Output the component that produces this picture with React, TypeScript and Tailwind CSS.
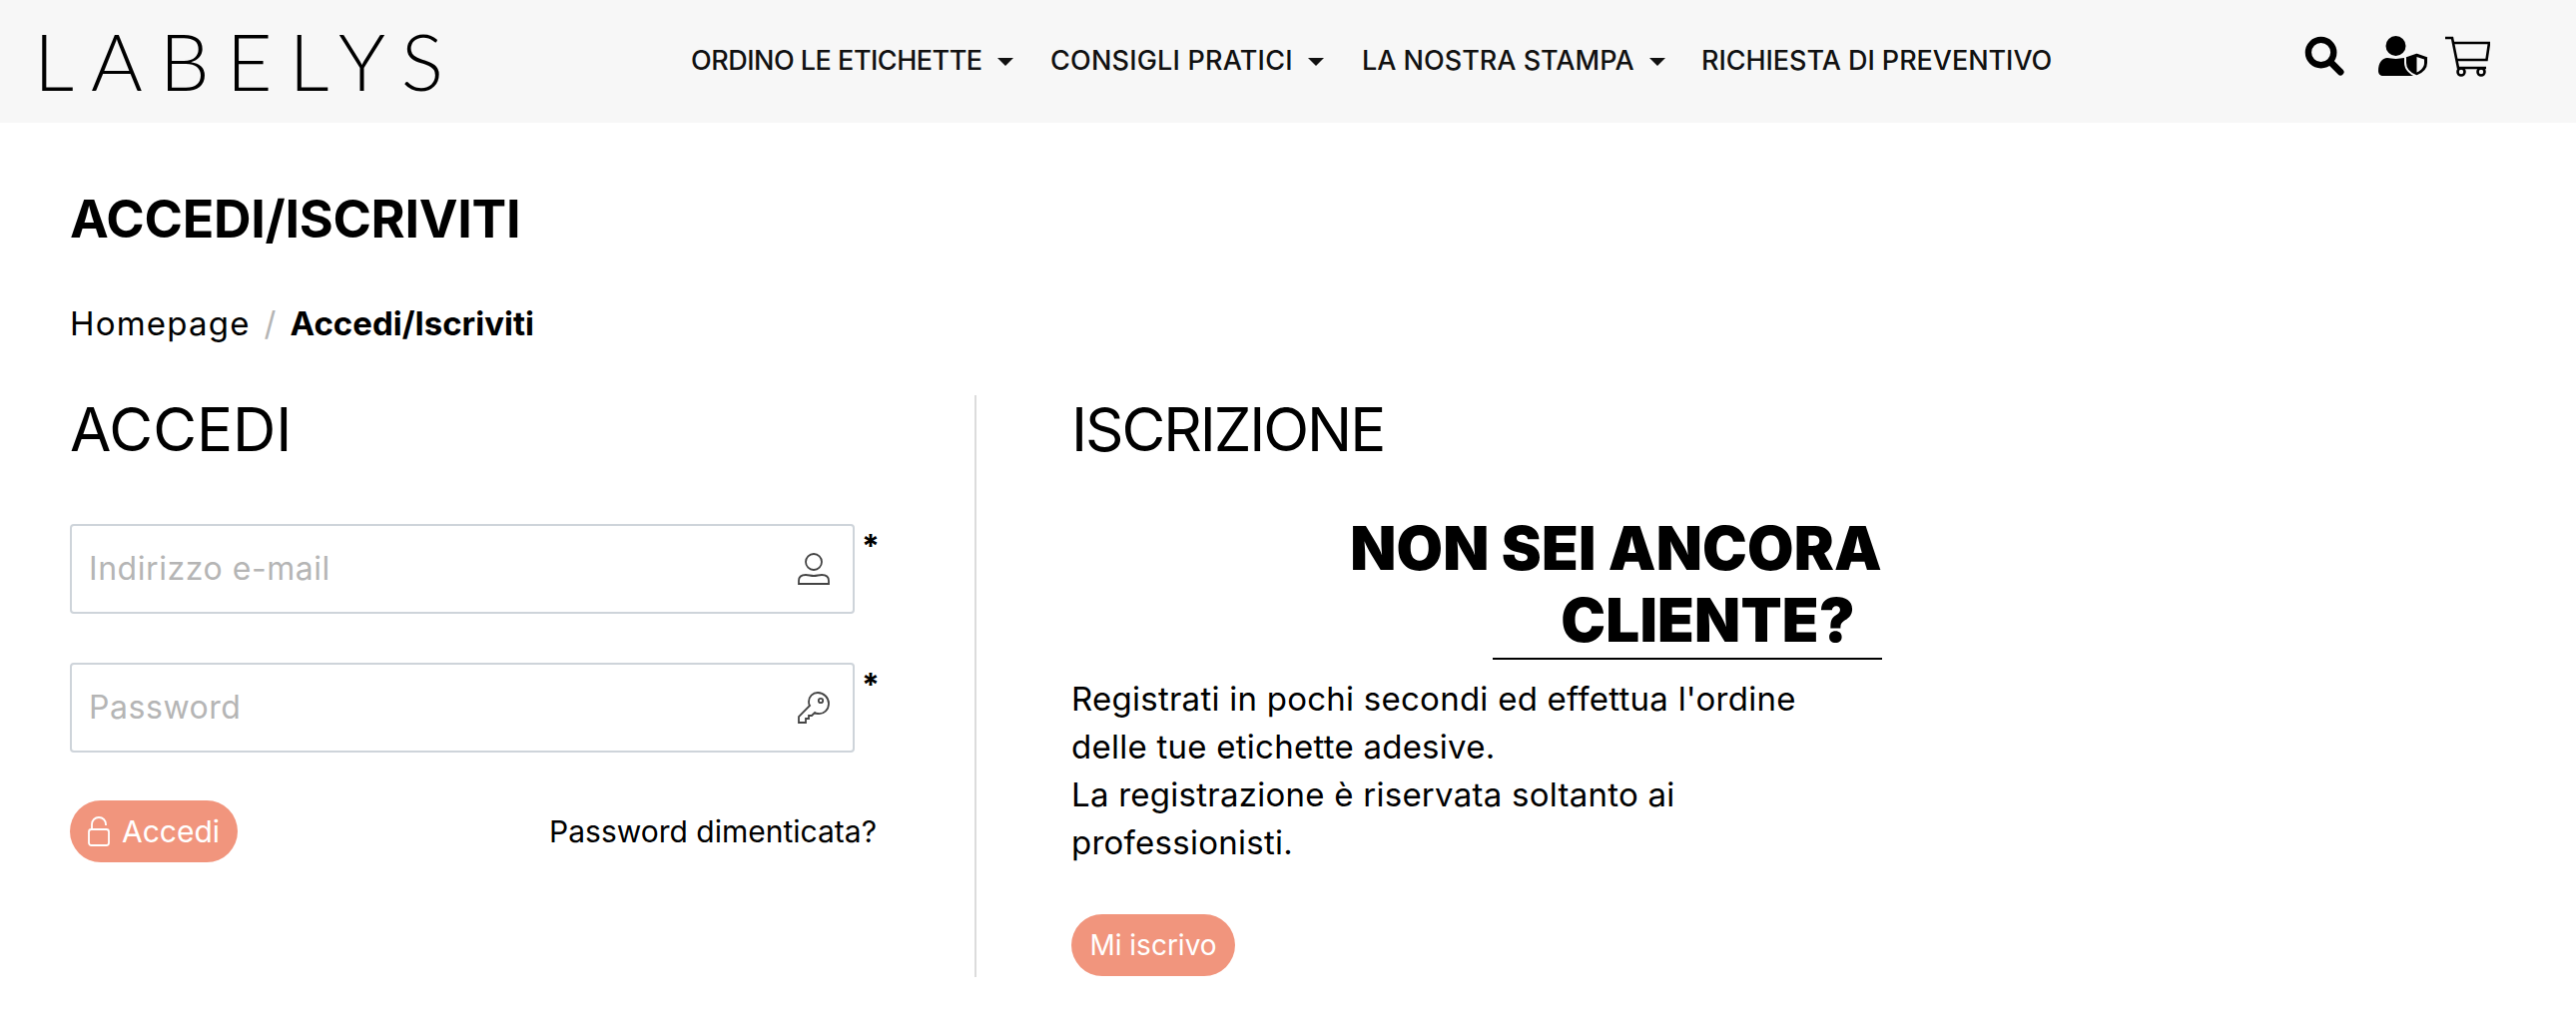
import React from "react";

const F = "font-['Inter','Liberation_Sans',sans-serif]";

function Caret() {
  return <span className="ml-[15px] inline-block w-0 h-0 border-x-[8px] border-x-transparent border-t-[8px] border-t-[#111]" />;
}

function NavItem({ label, caret, w, t }: { label: string; caret?: boolean; w: string; t: string }) {
  return (
    <a className={`flex items-center whitespace-nowrap text-[27px] font-medium text-[#111] ${t} ${w}`}>
      {label}
      {caret && <Caret />}
    </a>
  );
}

function Field({ placeholder, icon }: { placeholder: string; icon: React.ReactNode }) {
  return (
    <div className="flex items-start">
      <div className="flex items-center justify-between w-[786px] h-[90px] border-2 border-[#ced4da] rounded-[4px] pl-[17px] pr-[23px] bg-white">
        <span className="text-[32px] tracking-[0.55px] text-[#b5b5b5]">{placeholder}</span>
        {icon}
      </div>
      <span className="ml-[7px] mt-[3px] text-[32px] leading-[40px] font-bold text-black">*</span>
    </div>
  );
}

export default function App() {
  return (
    <div className={`${F} min-h-[1022px] bg-white text-black`}>
      <header className="flex items-center h-[123px] bg-[#f7f7f7] pl-[34px]">
        <div className="w-[658px] font-['Lato',sans-serif] font-light text-[79px] leading-none tracking-[17px] text-black -mt-[3px]">LABELYS</div>
        <nav className="flex items-center h-full">
          <NavItem label="ORDINO LE ETICHETTE" caret w="w-[360px]" t="tracking-[-0.5px]" />
          <NavItem label="CONSIGLI PRATICI" caret w="w-[312px]" t="tracking-[0.2px]" />
          <NavItem label="LA NOSTRA STAMPA" caret w="w-[340px]" t="tracking-[0px]" />
          <NavItem label="RICHIESTA DI PREVENTIVO" w="w-[604px]" t="tracking-[-0.05px]" />
        </nav>
        <div className="flex items-center -mt-[10px]">
          <svg width="41" height="41" viewBox="0 0 42 42" fill="none" stroke="#000">
            <circle cx="17" cy="17" r="13" strokeWidth="6.5" />
            <path d="M27 27L37 37" strokeWidth="7" strokeLinecap="round" />
          </svg>
          <svg width="51" height="41" viewBox="0 0 51 41" className="ml-[33px]">
            <circle cx="17.500" cy="10" r="10" fill="#000" />
            <path d="M0 35c0-8 4-13 9-13 3 0 5 1 8.500 1s5-1 8.500-1c6 0 9 5 9 13v5H5c-3 0-5-2-5-5z" fill="#000" />
            <path d="M38.500 16.500l11.500 4v6.500c0 6-5 11-11.500 13.500C32 38 27 33 27 27v-6.500z" fill="#000" stroke="#f7f7f7" strokeWidth="2" />
            <path d="M38.500 21l7.500 2.500V27c0 4-3 7.500-7.500 9.500z" fill="#f7f7f7" />
          </svg>
          <svg width="46" height="42" viewBox="0 0 46 42" fill="none" stroke="#000" strokeWidth="2.600" className="ml-[15px]">
            <path d="M1 2h7l6 30h28" />
            <path d="M9 7h36l-2.500 17H12.500" />
            <circle cx="17" cy="36" r="3.500" />
            <circle cx="37" cy="36" r="3.500" />
          </svg>
        </div>
      </header>

      <main className="pl-[70px]">
        <h1 className="mt-[71px] text-[52px] leading-[52px] font-bold tracking-[-0.3px]">ACCEDI/ISCRIVITI</h1>
        <div className="mt-[58px] flex items-center text-[33px] leading-[40px]">
          <span className="tracking-[1.2px]">Homepage</span>
          <span className="mx-[14px] text-[#b5b5b5]">/</span>
          <span className="font-bold">Accedi/Iscriviti</span>
        </div>

        <div className="mt-[52px] flex">
          <section className="w-[908px] h-[583px] border-r-2 border-[#dcdcdc]">
            <h2 className="text-[60px] leading-[72px] -mt-[2px]">ACCEDI</h2>
            <div className="mt-[59px] flex flex-col gap-[49px]">
              <Field
                placeholder="Indirizzo e-mail"
                icon={
                  <svg width="32" height="32" viewBox="0 0 32 32" fill="none" stroke="#444" strokeWidth="1.800">
                    <circle cx="16" cy="9" r="8" />
                    <path d="M1 31v-3c0-4 3-6 7-6 3 0 5 1 8 1s5-1 8-1c4 0 7 2 7 6v3z" />
                  </svg>
                }
              />
              <Field
                placeholder="Password"
                icon={
                  <svg width="32" height="32" viewBox="0 0 32 32" fill="none" stroke="#444" strokeWidth="1.800">
                    <path d="M20 1c6 0 11 5 11 11s-5 11-11 10c-1 0-2 0-3-1l-3 3h-3v3H8v4H1v-6l11-11c-1-1-1-2-1-4 0-5 4-9 9-9z" />
                    <circle cx="23" cy="9" r="2.200" />
                  </svg>
                }
              />
            </div>
            <div className="mt-[48px] flex items-center justify-between w-[808px]">
              <button className="flex items-center h-[62px] w-[168px] rounded-full bg-[#f1957d] text-white text-[30px] pl-[18px]">
                <svg width="22" height="30" viewBox="0 0 22 30" fill="none" stroke="#fff" strokeWidth="1.800" className="mr-[12px]">
                  <rect x="1" y="13" width="20" height="16" rx="2.500" />
                  <path d="M4 13V8c0-4 3-7 7-7s7 3 7 7v1" />
                </svg>
                Accedi
              </button>
              <a className="text-[30px]">Password dimenticata?</a>
            </div>
          </section>

          <section className="w-[907px] pl-[95px]">
            <h2 className="text-[60px] leading-[72px] -mt-[2px] tracking-[-2.1px]">ISCRIZIONE</h2>
            <div className="mt-[47px] text-right">
              <div className="text-[60px] leading-[72px] font-black tracking-[0.2px]">NON SEI ANCORA</div>
              <div className="flex justify-end">
                <div className="w-[390px] border-b-2 border-black pb-[2px] pr-[27px] text-[60px] leading-[72px] font-black tracking-[0.2px]">CLIENTE?</div>
              </div>
            </div>
            <p className="mt-[15px] text-[33px] leading-[48px] w-[760px] tracking-[0.25px]">
              Registrati in pochi secondi ed effettua l'ordine delle tue etichette adesive.
              <br />
              La registrazione è riservata soltanto ai professionisti.
            </p>
            <button className="mt-[48px] h-[62px] w-[164px] rounded-full bg-[#f1957d] text-white text-[28px]">Mi iscrivo</button>
          </section>
        </div>
      </main>
    </div>
  );
}
